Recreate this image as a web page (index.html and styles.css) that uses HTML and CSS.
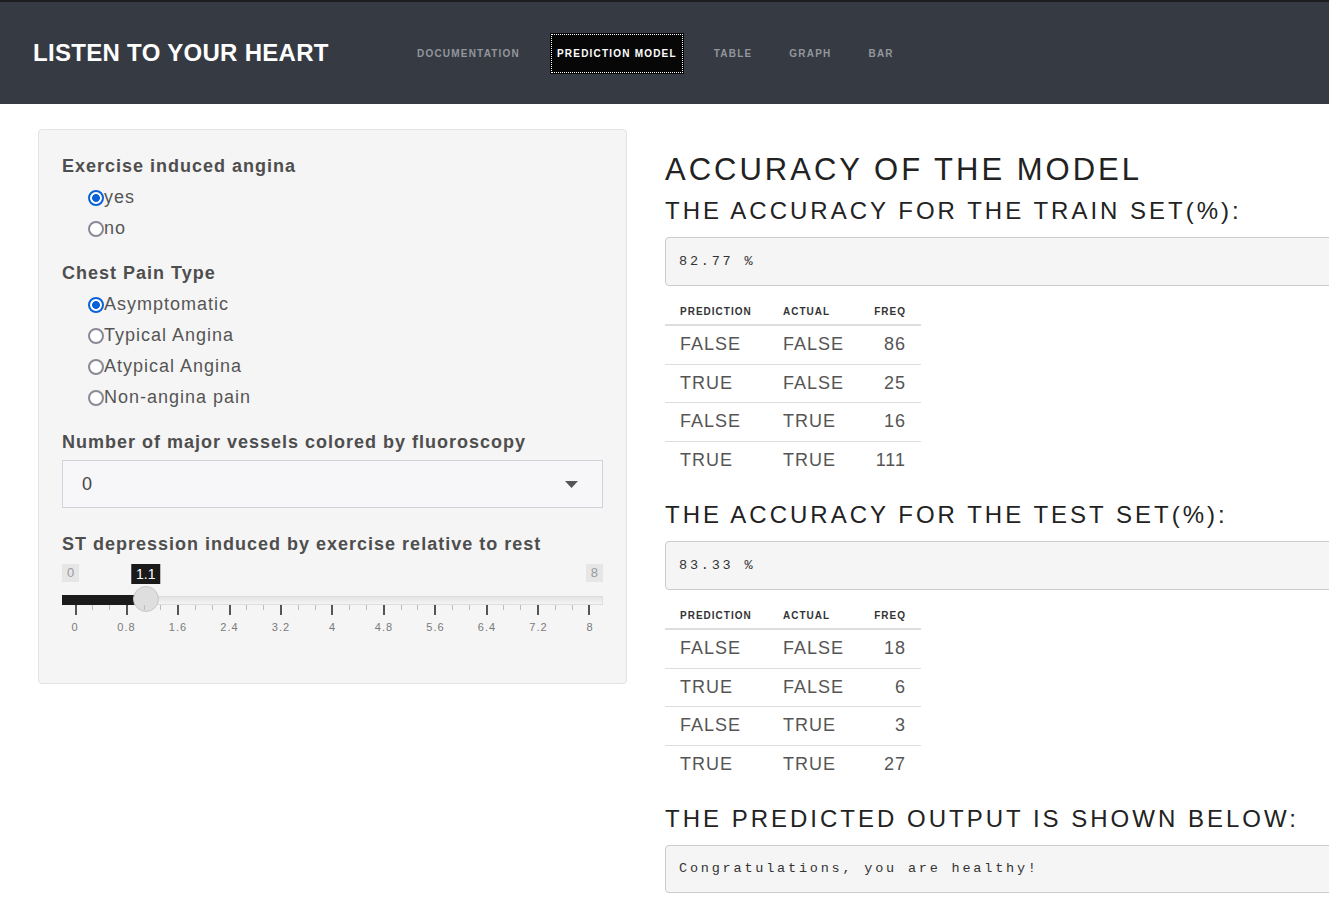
FILE: index.html
```html
<!DOCTYPE html>
<html lang="en">
<head>
<meta charset="utf-8">
<title>Listen to your heart</title>
<link rel="stylesheet" href="styles.css">
</head>
<body>
<header class="navbar">
  <div class="brand">LISTEN TO YOUR HEART</div>
  <nav class="nav">
    <a href="#">DOCUMENTATION</a>
    <a href="#" class="active">PREDICTION MODEL</a>
    <a href="#">TABLE</a>
    <a href="#">GRAPH</a>
    <a href="#">BAR</a>
  </nav>
</header>

<main class="layout">
  <aside class="well">
    <div class="group">
      <div class="label">Exercise induced angina</div>
      <div class="option"><span class="radio checked"></span>yes</div>
      <div class="option"><span class="radio"></span>no</div>
    </div>
    <div class="group">
      <div class="label">Chest Pain Type</div>
      <div class="option"><span class="radio checked"></span>Asymptomatic</div>
      <div class="option"><span class="radio"></span>Typical Angina</div>
      <div class="option"><span class="radio"></span>Atypical Angina</div>
      <div class="option"><span class="radio"></span>Non-angina pain</div>
    </div>
    <div class="group group-select">
      <div class="label">Number of major vessels colored by fluoroscopy</div>
      <div class="select">
        <span>0</span>
        <svg class="caret" width="13" height="7" viewBox="0 0 13 7"><path d="M0 0 L13 0 L6.5 7 Z" fill="#555"/></svg>
      </div>
    </div>
    <div class="group group-slider">
      <div class="label">ST depression induced by exercise relative to rest</div>
      <div class="slider">
        <span class="edge edge-min">0</span>
        <span class="edge edge-max">8</span>
        <span class="value" style="left: calc(13px + (100% - 26px) * 0.1375);">1.1</span>
        <div class="track"></div>
        <div class="fill" style="width: calc(13px + (100% - 26px) * 0.1375);"></div>
        <span class="handle" style="left: calc(13px + (100% - 26px) * 0.1375);"></span>
        <div class="ticks">
          <i class="major"></i><i></i><i></i><i class="major"></i><i></i><i></i><i class="major"></i><i></i><i></i><i class="major"></i><i></i><i></i><i class="major"></i><i></i><i></i><i class="major"></i><i></i><i></i><i class="major"></i><i></i><i></i><i class="major"></i><i></i><i></i><i class="major"></i><i></i><i></i><i class="major"></i><i></i><i></i><i class="major"></i>
        </div>
        <div class="tick-labels">
          <span><b>0</b></span><span><b>0.8</b></span><span><b>1.6</b></span><span><b>2.4</b></span><span><b>3.2</b></span><span><b>4</b></span><span><b>4.8</b></span><span><b>5.6</b></span><span><b>6.4</b></span><span><b>7.2</b></span><span><b>8</b></span>
        </div>
      </div>
    </div>
  </aside>

  <section class="main">
    <h2>ACCURACY OF THE MODEL</h2>
    <h3>THE ACCURACY FOR THE TRAIN SET(%):</h3>
    <pre class="out">82.77 %</pre>
    <table class="freq">
      <colgroup><col class="c1"><col class="c2"><col class="c3"></colgroup>
      <thead><tr><th>PREDICTION</th><th>ACTUAL</th><th class="num">FREQ</th></tr></thead>
      <tbody>
        <tr><td>FALSE</td><td>FALSE</td><td class="num">86</td></tr>
        <tr><td>TRUE</td><td>FALSE</td><td class="num">25</td></tr>
        <tr><td>FALSE</td><td>TRUE</td><td class="num">16</td></tr>
        <tr><td>TRUE</td><td>TRUE</td><td class="num">111</td></tr>
      </tbody>
    </table>
    <h3 class="later">THE ACCURACY FOR THE TEST SET(%):</h3>
    <pre class="out">83.33 %</pre>
    <table class="freq">
      <colgroup><col class="c1"><col class="c2"><col class="c3"></colgroup>
      <thead><tr><th>PREDICTION</th><th>ACTUAL</th><th class="num">FREQ</th></tr></thead>
      <tbody>
        <tr><td>FALSE</td><td>FALSE</td><td class="num">18</td></tr>
        <tr><td>TRUE</td><td>FALSE</td><td class="num">6</td></tr>
        <tr><td>FALSE</td><td>TRUE</td><td class="num">3</td></tr>
        <tr><td>TRUE</td><td>TRUE</td><td class="num">27</td></tr>
      </tbody>
    </table>
    <h3 class="later">THE PREDICTED OUTPUT IS SHOWN BELOW:</h3>
    <pre class="out out-last">Congratulations, you are healthy!</pre>
  </section>
</main>
</body>
</html>
```

FILE: styles.css
```css
html, body {
  margin: 0;
  padding: 0;
  overflow: hidden;
}

body {
  font-family: "Liberation Sans", Arial, sans-serif;
  background: #ffffff;
  color: #555555;
}

/* ---------- navbar ---------- */
.navbar {
  height: 102px;
  border-top: 2px solid #1b1d21;
  background: #363a42;
  display: flex;
  align-items: center;
}

.brand {
  width: 410px;
  box-sizing: border-box;
  padding-left: 33px;
  font-size: 24px;
  font-weight: bold;
  letter-spacing: 0.3px;
  color: #ffffff;
}

.nav {
  display: flex;
  gap: 23px;
}

.nav a {
  display: block;
  height: 41px;
  line-height: 41px;
  padding: 0 7px;
  font-size: 10px;
  font-weight: bold;
  letter-spacing: 1.2px;
  color: #92969d;
  text-decoration: none;
}

.nav a.active {
  background: #070707;
  color: #ffffff;
  outline: 1px dotted #ffffff;
  outline-offset: -2px;
}

/* ---------- layout ---------- */
.layout {
  display: flex;
  align-items: flex-start;
  gap: 38px;
  padding: 25px 0 0 38px;
  width: max-content;
}

.well {
  width: 589px;
  box-sizing: border-box;
  background: #f5f5f5;
  border: 1px solid #e3e3e3;
  border-radius: 4px;
  padding: 24px 23px 49px 23px;
}

.group {
  margin-bottom: 17px;
}

.group:last-child {
  margin-bottom: 0;
}

.group-select {
  margin-bottom: 24px;
}

.label {
  font-size: 18px;
  line-height: 24px;
  font-weight: bold;
  letter-spacing: 1px;
  color: #4e4e4e;
  margin-bottom: 4px;
}

.group-select .label {
  margin-bottom: 6px;
}

.group-slider .label {
  margin-bottom: 8px;
}

.option {
  display: flex;
  align-items: center;
  height: 31px;
  padding-left: 26px;
  font-size: 18px;
  letter-spacing: 1px;
  color: #555555;
}

.radio {
  width: 16px;
  height: 16px;
  box-sizing: border-box;
  border-radius: 50%;
  border: 2px solid #8a8a96;
  background: #ffffff;
  flex: none;
}

.radio.checked {
  border-color: #0b62d8;
  background: radial-gradient(circle, #0b62d8 0 3.6px, #ffffff 4.2px);
}

/* select */
.select {
  height: 48px;
  box-sizing: border-box;
  border: 1px solid #cfd3da;
  background: #f7f7f9;
  display: flex;
  align-items: center;
  justify-content: space-between;
  padding: 0 24px 0 19px;
  font-size: 18px;
  color: #444444;
}

.caret {
  display: block;
}

/* slider */
.slider {
  position: relative;
  height: 70px;
}

.edge {
  position: absolute;
  top: 0;
  height: 18px;
  line-height: 18px;
  padding: 0 5px;
  background: #e6e6e6;
  color: #9a9a9a;
  font-size: 13px;
}

.edge-min { left: 0; }
.edge-max { right: 0; }

.value {
  position: absolute;
  top: 0;
  height: 20px;
  line-height: 20px;
  padding: 0 5px;
  transform: translateX(-50%);
  background: #1a1a1a;
  color: #ffffff;
  font-size: 14px;
}

.track {
  position: absolute;
  left: 0;
  right: 0;
  top: 32px;
  height: 9px;
  box-sizing: border-box;
  background: linear-gradient(#e4e4e4, #f4f4f4);
  border: 1px solid #dddddd;
}

.fill {
  position: absolute;
  left: 0;
  top: 31px;
  height: 10px;
  background: #1b1b1b;
}

.handle {
  position: absolute;
  top: 22px;
  width: 26px;
  height: 26px;
  box-sizing: border-box;
  margin-left: -13px;
  border-radius: 50%;
  background: #dedede;
  border: 1px solid #c8c8c8;
}

.ticks {
  position: absolute;
  left: 13px;
  right: 13px;
  top: 41px;
  display: flex;
  justify-content: space-between;
  margin: 0 -0.5px;
}

.ticks i {
  display: block;
  width: 1px;
  height: 5px;
  background: #bdbdbd;
}

.ticks i.major {
  width: 2px;
  height: 10px;
  background: #555555;
}

.tick-labels {
  position: absolute;
  left: 13px;
  right: 13px;
  top: 55px;
  display: flex;
  justify-content: space-between;
}

.tick-labels span {
  width: 0;
  display: flex;
  justify-content: center;
}

.tick-labels b {
  font-weight: normal;
  font-size: 11px;
  line-height: 16px;
  letter-spacing: 1px;
  color: #7a7a7a;
  white-space: nowrap;
}

/* ---------- main column ---------- */
.main {
  width: 1224px;
  padding-top: 23px;
  color: #222222;
}

h2 {
  margin: 0;
  font-size: 31px;
  line-height: 36px;
  font-weight: normal;
  letter-spacing: 3px;
  color: #222222;
}

h3 {
  margin: 8px 0 0 0;
  font-size: 24px;
  line-height: 30px;
  font-weight: normal;
  letter-spacing: 3px;
  color: #222222;
}

h3.later {
  margin-top: 21px;
}

.out {
  margin: 11px 0 0 0;
  height: 49px;
  box-sizing: border-box;
  padding: 0 13px;
  line-height: 47px;
  background: #f5f5f5;
  border: 1px solid #cccccc;
  border-radius: 4px;
  font-family: "Liberation Mono", "Courier New", monospace;
  font-size: 13.5px;
  letter-spacing: 2.8px;
  color: #333333;
}

.out-last {
  height: 48px;
  line-height: 46px;
}

.freq {
  margin-top: 12px;
  width: 256px;
  table-layout: fixed;
  border-collapse: collapse;
}

.freq .c1 { width: 103px; }
.freq .c2 { width: 88px; }
.freq .c3 { width: 65px; }

.freq th {
  height: 26px;
  padding: 0 15px;
  text-align: left;
  font-size: 10px;
  font-weight: bold;
  letter-spacing: 1px;
  color: #333333;
  border-bottom: 2px solid #dddddd;
}

.freq td {
  padding: 0 15px;
  line-height: 37.5px;
  font-size: 18px;
  letter-spacing: 1px;
  color: #555555;
}

.freq tbody tr + tr td {
  border-top: 1px solid #dddddd;
}

.freq .num {
  text-align: right;
}
```
